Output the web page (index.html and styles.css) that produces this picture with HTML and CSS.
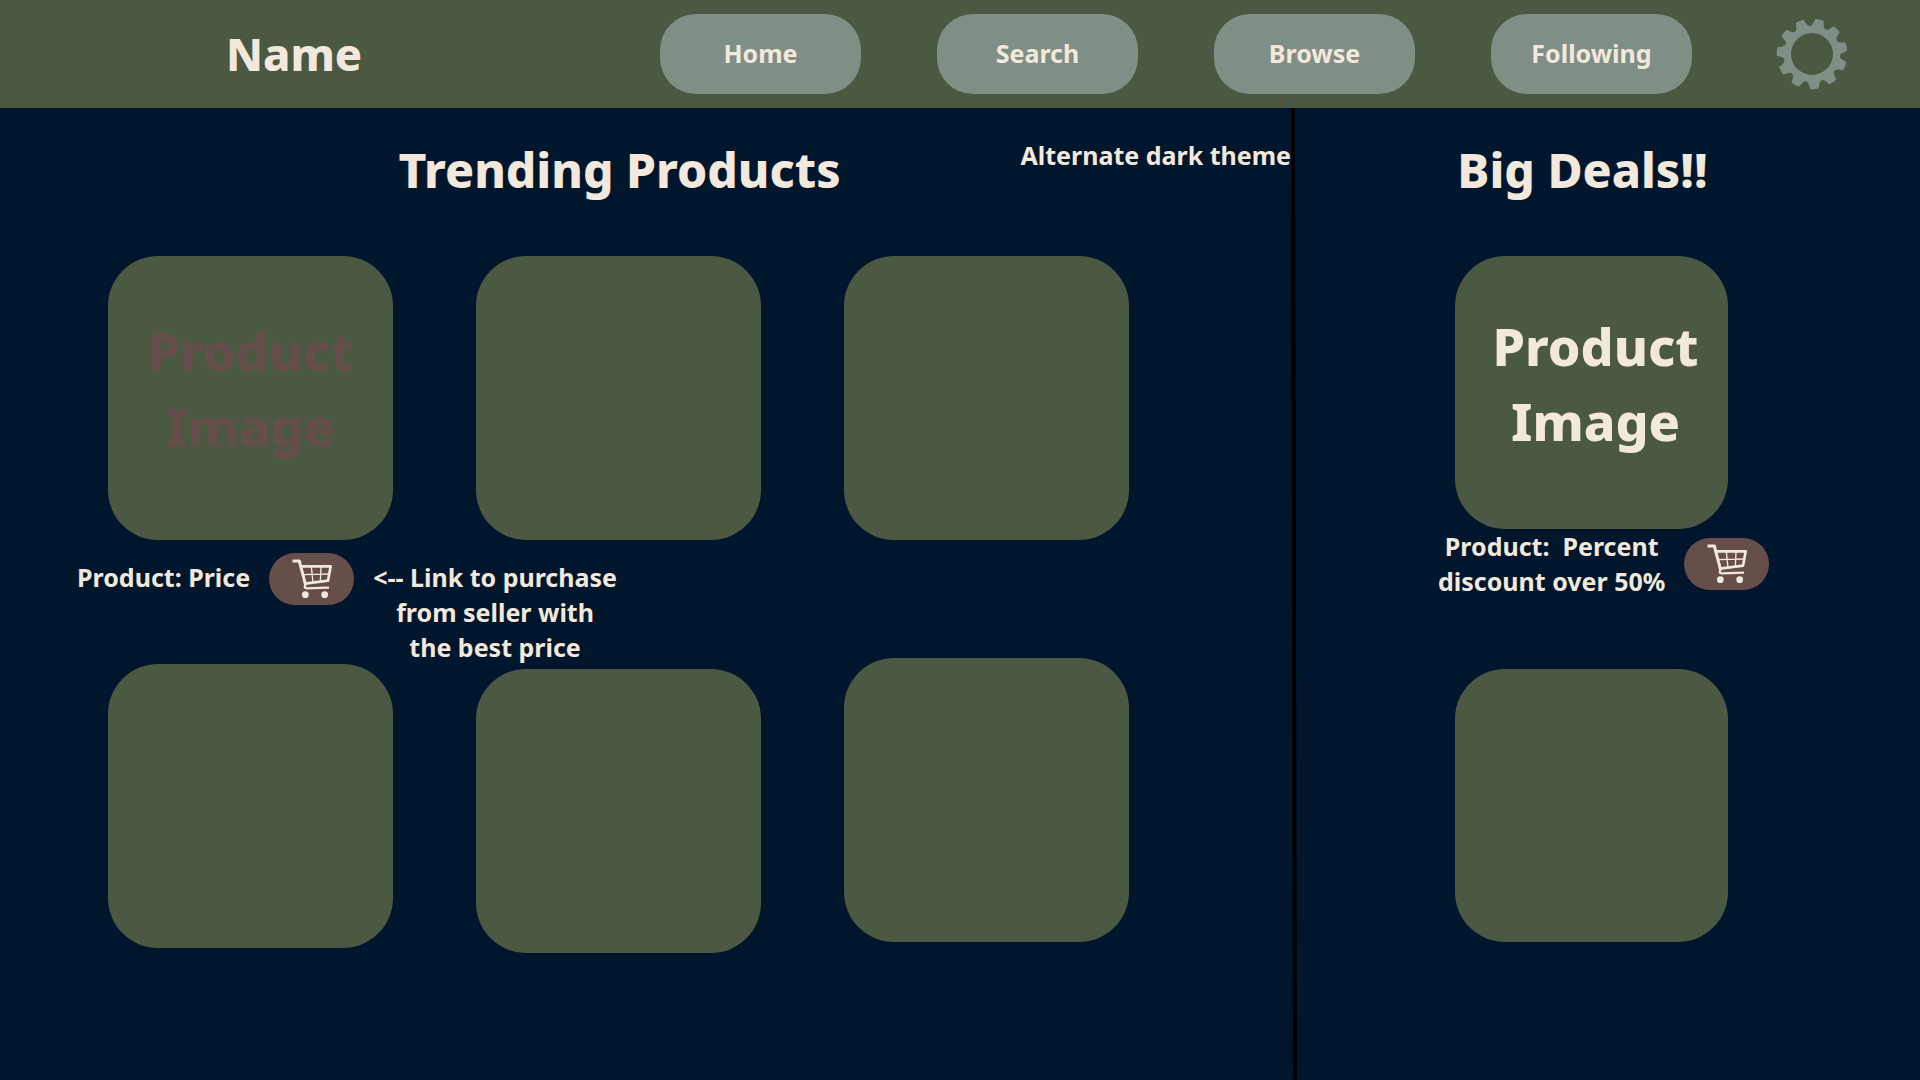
FILE: index.html
```html
<!DOCTYPE html>
<html lang="en">
<head>
  <meta charset="utf-8">
  <meta name="viewport" content="width=device-width, initial-scale=1">
  <title>Trending Products</title>
  <link rel="stylesheet" href="styles.css">
</head>
<body>
  <svg class="symbols" aria-hidden="true">
    <symbol id="cart" viewBox="94 43 120 120">
      <g fill="none" stroke="currentColor" stroke-linejoin="round">
        <path stroke-width="4" d="M152 66L157 114M181 66L179 111M124 90L207 88"/>
        <path stroke-width="9" stroke-linecap="square" d="M100 49H116L134 118"/>
        <path stroke-width="8" d="M121 65H210L202 108L133 117"/>
        <path stroke-width="7" stroke-linecap="round" d="M134 120Q129 131 138 131L202 129"/>
      </g>
      <circle cx="134" cy="150" r="10" fill="currentColor"/>
      <circle cx="192" cy="150" r="10" fill="currentColor"/>
    </symbol>
  </svg>

  <header class="topbar">
    <div class="brand">Name</div>
    <nav class="nav">
      <a class="nav-link" href="#home">Home</a>
      <a class="nav-link" href="#search">Search</a>
      <a class="nav-link" href="#browse">Browse</a>
      <a class="nav-link" href="#following">Following</a>
    </nav>
    <button class="settings" type="button" aria-label="Settings">
      <svg class="gear" viewBox="-36 -36 72 72" fill="currentColor">
        <defs>
          <path id="cog" d="M-9 26Q-6 27.500-5.500 29.500L-4.200 35Q0 35.700 4.200 35L5.500 29.500Q6 27.500 9 26L9 24H-9Z"/>
        </defs>
        <circle r="24.500" fill="none" stroke="currentColor" stroke-width="7"/>
        <use href="#cog" transform="rotate(-4)"/>
        <use href="#cog" transform="rotate(28.700)"/>
        <use href="#cog" transform="rotate(61.500)"/>
        <use href="#cog" transform="rotate(94.200)"/>
        <use href="#cog" transform="rotate(126.900)"/>
        <use href="#cog" transform="rotate(159.600)"/>
        <use href="#cog" transform="rotate(192.400)"/>
        <use href="#cog" transform="rotate(225.100)"/>
        <use href="#cog" transform="rotate(257.800)"/>
        <use href="#cog" transform="rotate(290.500)"/>
        <use href="#cog" transform="rotate(323.300)"/>
      </svg>
    </button>
  </header>

  <main class="page">
    <section class="trending">
      <div class="heading">
        <h1 class="title">Trending Products</h1>
        <p class="theme-note">Alternate dark theme</p>
      </div>
      <div class="cards">
        <div class="card muted">Product<br>Image</div>
        <div class="card"></div>
        <div class="card"></div>
      </div>
      <div class="caption">
        <p class="label">Product: Price</p>
        <a class="buy" href="#buy" aria-label="Purchase"><svg class="cart"><use href="#cart"/></svg></a>
        <p class="label">&lt;-- Link to purchase<br>from seller with<br>the best price</p>
      </div>
      <div class="cards staggered">
        <div class="card middle"></div>
        <div class="card low"></div>
        <div class="card"></div>
      </div>
    </section>

    <svg class="divider" viewBox="0 0 6 972" preserveAspectRatio="none" aria-hidden="true">
      <path d="M0 0H4L6 972H2Z"/>
    </svg>

    <section class="deals">
      <div class="heading">
        <h2 class="title">Big Deals!!</h2>
      </div>
      <div class="deal-list">
        <div class="card deal">Product<br>Image</div>
        <div class="deal-caption">
          <p>Product:&nbsp; Percent<br>discount over 50%</p>
          <a class="buy" href="#deal" aria-label="Purchase"><svg class="cart"><use href="#cart"/></svg></a>
        </div>
        <div class="card deal"></div>
      </div>
    </section>
  </main>
</body>
</html>
```
FILE: styles.css
```css
:root {
  --navy: #00162d;
  --green: #4b5842;
  --sage: #808f85;
  --cream: #f2e8dc;
  --brown: #664e4b;
}

* {
  box-sizing: border-box;
}

body {
  display: flex;
  flex-direction: column;
  min-height: 100vh;
  margin: 0;
  background: var(--navy);
  color: var(--cream);
  font: 700 25px/35px "Noto Sans", "Open Sans", sans-serif;
}

h1, h2, p {
  margin: 0;
}

a {
  color: inherit;
  text-decoration: none;
}

.symbols {
  display: none;
}

/* Top bar */
.topbar {
  display: flex;
  align-items: center;
  gap: 84px;
  min-height: 108px;
  padding: 0 72px 0 226px;
  background: var(--green);
}

.brand {
  flex: 1;
  font-size: 45px;
  font-weight: 800;
  line-height: 64px;
}

.nav {
  display: flex;
  gap: 76px;
}

.nav-link {
  display: flex;
  align-items: center;
  justify-content: center;
  width: 201px;
  height: 80px;
  padding-bottom: 2px;
  border-radius: 36px;
  background: var(--sage);
}

.settings {
  padding: 0;
  border: 0;
  background: none;
  color: var(--sage);
  cursor: pointer;
}

.gear {
  display: block;
  width: 72px;
  height: 72px;
}

/* Two panels with a rule between them */
.page {
  flex: 1;
  display: grid;
  grid-template-columns: minmax(0, 1291fr) 6px minmax(0, 623fr);
}

.divider {
  width: 6px;
  height: 100%;
  fill: #000;
}

.heading {
  display: grid;
  padding-top: 30px;
  margin-bottom: 54px;
}

.title {
  grid-area: 1 / 1;
  padding-right: 52px;
  font-size: 48px;
  font-weight: 800;
  line-height: 64px;
  text-align: center;
}

.theme-note {
  grid-area: 1 / 1;
  justify-self: end;
}

/* Cards */
.cards {
  display: grid;
  grid-template-columns: repeat(3, 1fr);
  gap: 83px;
  padding: 0 162px 0 108px;
}

.staggered {
  min-height: 295px;
}

.card {
  display: flex;
  align-items: center;
  justify-content: center;
  aspect-ratio: 285 / 284;
  align-self: start;
  padding-bottom: 20px;
  border-radius: 50px;
  background: var(--green);
  font-size: 52px;
  font-weight: 800;
  line-height: 75px;
  text-align: center;
}

.card.middle {
  align-self: center;
}

.card.low {
  align-self: end;
}

.card.muted {
  color: var(--brown);
}

.caption {
  display: flex;
  align-items: flex-start;
  gap: 19px;
  padding: 13px 0 0 77px;
  margin-bottom: -7px;
}

.label {
  padding-top: 7px;
  text-align: center;
}

.buy {
  display: flex;
  align-items: center;
  justify-content: center;
  width: 85px;
  height: 52px;
  border-radius: 26px;
  background: var(--brown);
}

.cart {
  width: 40px;
  height: 40px;
}

/* Deals */
.deal-list {
  display: flex;
  flex-direction: column;
  padding: 0 192px 0 158px;
}

.card.deal {
  align-self: stretch;
  aspect-ratio: 1;
  padding-left: 8px;
}

.deal-caption {
  display: flex;
  align-items: center;
  gap: 19px;
  margin: 0 -48px 70px -17px;
  text-align: center;
  white-space: nowrap;
}
```
